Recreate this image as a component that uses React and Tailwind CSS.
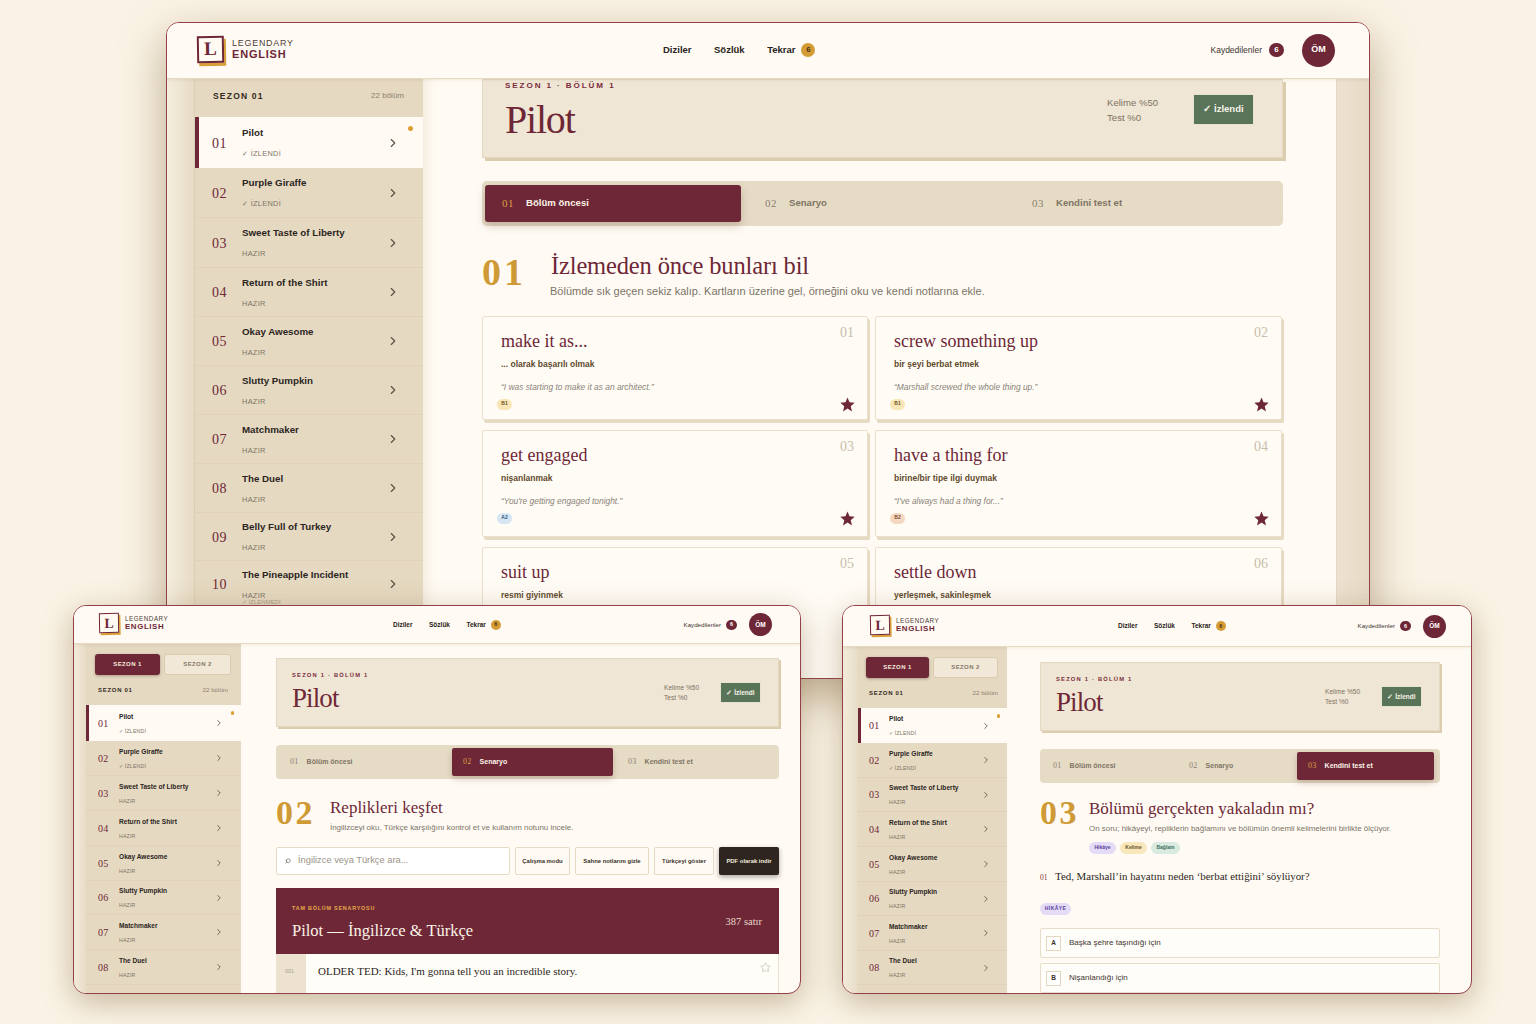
import React from 'react';
import { ChevronRight, Star, Search } from 'lucide-react';

const serif = "font-['Liberation_Serif',serif]";

const episodes = [
  ['01', 'Pilot', '✓ İZLENDİ'],
  ['02', 'Purple Giraffe', '✓ İZLENDİ'],
  ['03', 'Sweet Taste of Liberty', 'HAZIR'],
  ['04', 'Return of the Shirt', 'HAZIR'],
  ['05', 'Okay Awesome', 'HAZIR'],
  ['06', 'Slutty Pumpkin', 'HAZIR'],
  ['07', 'Matchmaker', 'HAZIR'],
  ['08', 'The Duel', 'HAZIR'],
  ['09', 'Belly Full of Turkey', 'HAZIR'],
  ['10', 'The Pineapple Incident', 'HAZIR'],
];

const big = {
  logoBox: 'w-[27px] h-[27px] shadow-[2px_3px_0_#d9a03a] border-2 text-[19px] -rotate-1',
  logoGap: 'gap-[8px]',
  logoTop: 'text-[8.9px] tracking-[0.8px] leading-[11px]',
  logoBottom: 'text-[11px] tracking-[0.8px] leading-[11px]',
  logoNudge: '-mt-[2px]',
  navGap: 'gap-[22.5px]',
  nav: 'text-[9.5px] font-bold',
  tekrarGap: 'gap-[6px]',
  navBadge: 'w-[14px] h-[14px] text-[8px]',
  right: 'text-[8.5px]',
  rightGap: 'gap-[7px]',
  kBadge: 'w-[15px] h-[14px] text-[8px]',
  avatar: 'w-[33px] h-[33px] text-[9px] ml-[11px]',
  sideHead: 'h-[38px] pl-[18px] pr-[19px] pb-[4px]',
  sideT: 'text-[8.5px] tracking-[1.2px]',
  sideR: 'text-[8px]',
  num: 'text-[14px] tracking-[0.5px] pt-[1px]',
  title: 'text-[9.75px] leading-[13px]',
  sub: 'text-[7.4px] leading-[10px] mt-[10px] tracking-[0.3px]',
  chev: 14,
  chevW: 'pr-[23px]',
  bar: 'w-[4px]',
  dot: 'w-[5px] h-[5px] top-[9px] right-[10px]',
  heroH: 'h-[79px] pl-[22px] pr-[28px] shadow-[3px_3px_0_#dccdae]',
  heroPt: 'pt-[14px]',
  eyebrow: 'text-[8.1px] tracking-[1.9px] leading-[12px]',
  heroTitle: 'text-[40px] leading-[44px] mt-[6px] tracking-[-1.2px]',
  stats: 'w-[86px] text-[9.6px] leading-[15px] font-medium',
  statsMt: 'mt-[1px]',
  btn: 'w-[61px] h-[31px] text-[9.5px]',
  track: 'h-[45px] py-[4px] pl-[3px] pr-[4px] rounded-[5px]',
  tabN: 'text-[11px] tracking-[0.5px]',
  tabL: 'text-[9.6px]',
  tabGap: 'gap-[12px]',
  activeTab: 'rounded-[3px] shadow-[0_4px_8px_rgba(90,50,40,0.25)]',
  big: 'text-[38px] leading-[38px] tracking-[3px] font-semibold',
  heading: 'text-[24.5px] leading-[30px] tracking-[-0.15px] pl-[1px]',
  desc: 'text-[11px] leading-[14px] mt-[3px]',
};

const small = {
  logoBox: 'w-[20px] h-[20px] shadow-[1.5px_2px_0_#d9a03a] border-[1.5px] text-[14px] -rotate-1',
  logoGap: 'gap-[6px]',
  logoTop: 'text-[6.3px] tracking-[0.5px] leading-[8px]',
  logoBottom: 'text-[7.9px] tracking-[0.6px] leading-[8px]',
  logoNudge: '-mt-[3px]',
  navGap: 'gap-[16.5px]',
  nav: 'text-[6.5px] font-bold',
  tekrarGap: 'gap-[5px]',
  navBadge: 'w-[10px] h-[10px] text-[5.5px]',
  right: 'text-[6.2px]',
  rightGap: 'gap-[5px]',
  kBadge: 'w-[11px] h-[10px] text-[5.5px]',
  avatar: 'w-[23px] h-[23px] text-[6.5px] ml-[7px]',
  sideT: 'text-[6px] tracking-[0.7px]',
  sideR: 'text-[6.2px]',
  num: 'text-[10px] tracking-[0.3px]',
  title: 'text-[6.6px] leading-[9px]',
  sub: 'text-[5.2px] leading-[7px] mt-[7px] tracking-[0.2px]',
  chev: 10,
  bar: 'w-[3px]',
  dot: 'w-[3.5px] h-[3.5px] top-[6px] right-[7px]',
  heroH: 'h-[69px] pl-[15px] pr-[17px] shadow-[2px_2px_0_#dccdae]',
  heroPt: 'pt-[23px]',
  eyebrow: 'text-[5.8px] tracking-[1.2px] leading-[8px] mt-[12px]',
  heroTitle: 'text-[27px] leading-[30px] mt-[4px] tracking-[-0.9px]',
  stats: 'w-[56px] text-[6.6px] leading-[10px] font-medium',
  statsMt: 'mt-[1px]',
  btn: 'w-[41px] h-[21px] text-[6.5px]',
  track: 'h-[34px] p-[3px] rounded-[4px]',
  tabN: 'text-[8px] tracking-[0.3px]',
  tabL: 'text-[7px]',
  tabGap: 'gap-[8px]',
  activeTab: 'rounded-[2px] shadow-[0_3px_6px_rgba(90,50,40,0.25)]',
  big: 'text-[34px] leading-[34px] tracking-[2.5px] font-semibold',
  heading: 'text-[17px] leading-[22px]',
  desc: 'text-[7.95px] leading-[10px] mt-[4px]',
};

function StarSolid({ size = 15 }) {
  return (
    <svg width={size} height={size} viewBox="0 0 20 20" className="shrink-0">
      <polygon points="10,0.5 12.7,7.1 19.6,7.6 14.3,12.2 16,19.2 10,15.4 4,19.2 5.7,12.2 0.4,7.6 7.3,7.1" fill="#6e2737" />
    </svg>
  );
}

function Logo({ t }) {
  return (
    <div className={`flex items-center ${t.logoGap} ${t.logoNudge}`}>
      <div className={`flex items-center justify-center bg-[#fffaf2] border-[#6e2737] text-[#6e2737] font-bold ${serif} ${t.logoBox}`}>L</div>
      <div className="flex flex-col">
        <span className={`text-[#4d3d38] ${t.logoTop}`}>LEGENDARY</span>
        <span className={`text-[#6e2737] font-bold ${t.logoBottom}`}>ENGLISH</span>
      </div>
    </div>
  );
}

function Header({ t, h, logoW, rightPad }) {
  return (
    <div className={`flex items-center shrink-0 bg-[#fffbf4] border-b border-[#e6dac3] relative z-10 shadow-[0_1px_3px_rgba(140,110,60,0.12)] ${h}`}>
      <div className={`shrink-0 ${logoW}`}><Logo t={t} /></div>
      <nav className={`flex items-center text-[#2a2320] ${t.navGap} ${t.nav}`}>
        <span>Diziler</span>
        <span>Sözlük</span>
        <span className={`flex items-center ${t.tekrarGap}`}>
          Tekrar
          <span className={`flex items-center justify-center rounded-full bg-[#d39c35] text-[#4a3216] ${t.navBadge}`}>6</span>
        </span>
      </nav>
      <div className={`ml-auto flex items-center text-[#3d3430] ${t.rightGap} ${t.right} ${rightPad}`}>
        <span>Kaydedilenler</span>
        <span className={`flex items-center justify-center rounded-full bg-[#6e2737] text-white font-bold ${t.kBadge}`}>6</span>
        <span className={`flex items-center justify-center rounded-full bg-[#6e2737] text-white font-bold ${t.avatar}`}>ÖM</span>
      </div>
    </div>
  );
}

function Rows({ t, rows, count, numCol, chev }) {
  return (
    <>
      {episodes.slice(0, count).map((e, i) => {
        const active = i === 0;
        return (
          <div key={e[0]} className={`relative flex items-center shrink-0 ${rows[i]} ${active ? 'bg-[#fffbf4]' : 'border-b border-[#dfd2b8]'}`}>
            {active && <span className={`absolute left-0 top-0 bottom-0 bg-[#6e2737] ${t.bar}`} />}
            {active && <span className={`absolute rounded-full bg-[#dd9f33] ${t.dot}`} />}
            <div className={`shrink-0 text-[#6e2737] ${serif} ${t.num} ${numCol}`}>{e[0]}</div>
            <div className="flex-1 min-w-0">
              <div className={`font-bold text-[#2c2522] ${t.title}`}>{e[1]}</div>
              <div className={`text-[#7d7465] ${t.sub}`}>{e[2]}</div>
            </div>
            <div className={chev}><ChevronRight size={t.chev} strokeWidth={2} className="text-[#5c5247]" /></div>
          </div>
        );
      })}
    </>
  );
}

function SideHead({ t, cls }) {
  return (
    <div className={`flex items-center justify-between shrink-0 ${cls}`}>
      <span className={`font-bold text-[#33291f] ${t.sideT}`}>SEZON 01</span>
      <span className={`text-[#8b8070] ${t.sideR}`}>22 bölüm</span>
    </div>
  );
}

function SeasonTabs({ cls }) {
  return (
    <div className={`flex shrink-0 gap-[4px] ${cls}`}>
      <div className="flex-1 flex items-center justify-center rounded-[3px] bg-[#6e2737] text-[#f7ecdc] text-[6px] font-bold tracking-[0.4px] shadow-[0_1px_3px_rgba(60,30,20,0.35)]">SEZON 1</div>
      <div className="flex-1 flex items-center justify-center rounded-[3px] bg-[#f1e8d7] border border-[#d9cbaf] text-[#85796a] text-[6px] font-bold tracking-[0.4px]">SEZON 2</div>
    </div>
  );
}

function Hero({ t }) {
  return (
    <div className={`flex justify-between shrink-0 bg-[#f0e6d5] border border-[#e4d8c0] ${t.heroH}`}>
      <div className="min-w-0">
        <div className={`font-bold text-[#7a2c3c] ${t.eyebrow}`}>SEZON 1 · BÖLÜM 1</div>
        <div className={`text-[#6e2737] ${serif} ${t.heroTitle}`}>Pilot</div>
      </div>
      <div className={`flex items-start ${t.heroPt}`}>
        <div className={`text-[#7d7263] ${t.statsMt} ${t.stats}`}><div>Kelime %50</div><div>Test %0</div></div>
        <div className={`flex items-center justify-center bg-[#5a7459] border border-[#e8e2d0] text-[#f6f3e8] font-bold ${t.btn}`}>✓ İzlendi</div>
      </div>
    </div>
  );
}

function Tab({ t, n, label, active, cls }) {
  return (
    <div className={`flex items-center ${t.tabGap} ${cls} ${active ? `bg-[#6e2737] ${t.activeTab}` : ''}`}>
      <span className={`${serif} ${t.tabN} ${active ? 'text-[#dd9f3e]' : 'text-[#8b8071]'}`}>{n}</span>
      <span className={`font-bold ${t.tabL} ${active ? 'text-[#fbf3e6]' : 'text-[#7f7464]'}`}>{label}</span>
    </div>
  );
}

function SectionHead({ t, n, title, desc, numW, cls, headCls = '', children }) {
  return (
    <div className={`flex shrink-0 ${cls}`}>
      <div className={`shrink-0 text-[#cf9a35] ${serif} ${t.big} ${numW}`}>{n}</div>
      <div className="min-w-0">
        <div className={`text-[#6e2737] ${serif} ${t.heading} ${headCls}`}>{title}</div>
        <div className={`text-[#7b7367] ${t.desc}`}>{desc}</div>
        {children}
      </div>
    </div>
  );
}

const badge = {
  B1: 'bg-[#f8e6b6] text-[#6b5326]',
  A2: 'bg-[#d6e6f3] text-[#2f5877]',
  B2: 'bg-[#f5d8c2] text-[#7b4a2a]',
};

function Card({ n, title, tr, quote, level, h }) {
  return (
    <div className={`relative bg-[#fffcf6] border border-[#eadfca] rounded-[2px] shadow-[2px_3px_0_#e6dac2] pl-[18px] ${h}`}>
      <span className={`absolute top-[5px] right-[13px] text-[14px] text-[#c8bdaa] ${serif}`}>{n}</span>
      <div className={`text-[#6e2737] text-[18px] leading-[22px] mt-[12.5px] ${serif}`}>{title}</div>
      <div className="text-[8.5px] font-bold text-[#5f4a2c] leading-[11px] mt-[7px]">{tr}</div>
      {quote && <div className="text-[8.4px] italic text-[#8a8276] leading-[11px] mt-[12px]">{quote}</div>}
      {level && (
        <div className="flex items-center justify-between -ml-[4px] pr-[12px] mt-[4px]">
          <span className={`flex items-center justify-center rounded-full w-[15px] h-[11px] text-[5px] font-bold ${badge[level]}`}>{level}</span>
          <StarSolid size={15} />
        </div>
      )}
    </div>
  );
}

function Windowframe({ cls, children }) {
  return (
    <div className={`absolute flex flex-col overflow-hidden bg-[#fffbf4] border-[1.5px] border-[#93404b] rounded-[13px] ${cls}`}>
      {children}
    </div>
  );
}

function BigWindow() {
  const t = big;
  const rows = ['h-[51px]', 'h-[50px]', 'h-[50px]', 'h-[49px]', 'h-[49px]', 'h-[49px]', 'h-[49px]', 'h-[49px]', 'h-[48px]', 'h-[47px]'];
  return (
    <Windowframe cls="left-[166px] top-[22px] w-[1204px] h-[657px] shadow-[0_16px_44px_rgba(130,100,55,0.5)]">
      <Header t={t} h="h-[56px] pb-[1px]" logoW="w-[496px] pl-[30px]" rightPad="pr-[34px]" />
      <div className="flex flex-1 min-h-0">
        <div className="w-[27px] shrink-0 bg-gradient-to-r from-[#f5edde] to-[#e6dbc4]" />
        <div className="w-[229px] shrink-0 flex flex-col bg-[#e5d9c1] border-l border-[#dccfb4] overflow-hidden">
          <SideHead t={t} cls={t.sideHead} />
          <Rows t={t} rows={rows} count={10} numCol="w-[47px] pl-[17px]" chev={t.chevW} />
          <div className="relative -mt-[9px] pl-[47px] text-[6px] text-[#a69b88] leading-[7px] shrink-0">✓ İZLENMEDİ</div>
        </div>
        <div className="flex-1 min-w-0 pl-[59px] pr-[53px] flex flex-col shadow-[inset_12px_0_16px_-12px_rgba(150,120,70,0.2)]">
          <Hero t={t} />
          <div className={`flex shrink-0 mt-[23px] bg-[#e6dcc6] ${t.track}`}>
            <Tab t={t} n="01" label="Bölüm öncesi" active cls="w-[256px] pl-[17px]" />
            <Tab t={t} n="02" label="Senaryo" cls="w-[267px] pl-[24px]" />
            <Tab t={t} n="03" label="Kendini test et" cls="flex-1 pl-[24px]" />
          </div>
          <SectionHead
            t={t}
            n="01"
            title="İzlemeden önce bunları bil"
            desc="Bölümde sık geçen sekiz kalıp. Kartların üzerine gel, örneğini oku ve kendi notlarına ekle."
            numW="w-[68px] pt-[2px]"
            cls="mt-[25px]"
          />
          <div className="grid grid-cols-[386px_407px] gap-x-[7px] gap-y-[10px] mt-[18px]">
            <Card n="01" title="make it as..." tr="... olarak başarılı olmak" quote="“I was starting to make it as an architect.”" level="B1" h="h-[104px]" />
            <Card n="02" title="screw something up" tr="bir şeyi berbat etmek" quote="“Marshall screwed the whole thing up.”" level="B1" h="h-[104px]" />
            <Card n="03" title="get engaged" tr="nişanlanmak" quote="“You're getting engaged tonight.”" level="A2" h="h-[107px]" />
            <Card n="04" title="have a thing for" tr="birine/bir tipe ilgi duymak" quote="“I've always had a thing for...”" level="B2" h="h-[107px]" />
            <Card n="05" title="suit up" tr="resmi giyinmek" h="h-[150px]" />
            <Card n="06" title="settle down" tr="yerleşmek, sakinleşmek" h="h-[150px]" />
          </div>
        </div>
        <div className="w-[33px] shrink-0 bg-gradient-to-r from-[#ece2cf] to-[#e6dbc6] border-l border-[#e4d8c2]" />
      </div>
    </Windowframe>
  );
}

function Tool({ children, cls }) {
  return <div className={`flex items-center justify-center bg-[#fffbf4] border border-[#e6dac3] rounded-[2px] text-[5.9px] font-bold text-[#3a302a] ${cls}`}>{children}</div>;
}

function SmallSidebar({ rows, width, numCol, chev, tabsCls, headCls }) {
  return (
    <div className={`shrink-0 flex flex-col bg-[#e5d9c1] overflow-hidden ${width}`}>
      <SeasonTabs cls={tabsCls} />
      <SideHead t={small} cls={headCls} />
      <Rows t={small} rows={rows} count={8} numCol={numCol} chev={chev} />
    </div>
  );
}

function LeftWindow() {
  const t = small;
  return (
    <Windowframe cls="left-[73px] top-[605px] w-[728px] h-[389px] z-10 shadow-[0_8px_30px_rgba(130,100,55,0.42)]">
      <Header t={t} h="h-[38px]" logoW="w-[319px] pl-[25px]" rightPad="pr-[28px]" />
      <div className="flex flex-1 min-h-0">
        <div className="w-[12px] shrink-0 bg-gradient-to-r from-[#f3ebda] to-[#e7dcc6]" />
        <SmallSidebar
          width="w-[155px]"
          rows={['h-[36px]', 'h-[35px]', 'h-[35px]', 'h-[35px]', 'h-[35px]', 'h-[34px]', 'h-[35px]', 'h-[35px]']}
          numCol="w-[33px] pl-[12px]"
          chev="pr-[17px]"
          tabsCls="h-[21px] mt-[10px] ml-[9px] mr-[10px]"
          headCls="h-[30px] pl-[12px] pr-[13px]"
        />
        <div className="flex-1 min-w-0 pl-[35px] pr-[21px] pt-[14px] flex flex-col">
          <Hero t={t} />
          <div className={`flex shrink-0 mt-[18px] bg-[#e6dcc6] ${t.track}`}>
            <Tab t={t} n="01" label="Bölüm öncesi" cls="w-[173px] pl-[11px]" />
            <Tab t={t} n="02" label="Senaryo" active cls="w-[161px] pl-[11px]" />
            <Tab t={t} n="03" label="Kendini test et" cls="flex-1 pl-[15px]" />
          </div>
          <SectionHead
            t={t}
            n="02"
            title="Replikleri keşfet"
            desc="İngilizceyi oku, Türkçe karşılığını kontrol et ve kullanım notunu incele."
            numW="w-[54px] -mt-[1px]"
            cls="mt-[18px]"
          />
          <div className="flex shrink-0 gap-[5px] h-[28px] mt-[14px]">
            <div className="w-[234px] flex items-center gap-[5px] pl-[8px] bg-white border border-[#e6dac3] rounded-[2px] text-[9.3px] text-[#9b9488]">
              <Search size={6} strokeWidth={2.5} className="-scale-x-100 text-[#6a6155]" />
              <span className="ml-[2px]">İngilizce veya Türkçe ara...</span>
            </div>
            <Tool cls="w-[55px]">Çalışma modu</Tool>
            <Tool cls="w-[74px]">Sahne notlarını gizle</Tool>
            <Tool cls="w-[60px]">Türkçeyi göster</Tool>
            <div className="w-[60px] flex items-center justify-center rounded-[2px] bg-[#2f2520] text-[#f4ecde] text-[5.9px] font-bold shadow-[0_2px_5px_rgba(40,30,20,0.4)]">PDF olarak indir</div>
          </div>
          <div className="flex justify-between shrink-0 h-[66px] mt-[13px] pl-[16px] pr-[17px] bg-[#6e2737]">
            <div>
              <div className="text-[5.4px] font-bold tracking-[0.8px] text-[#e5ac4a] mt-[17px] leading-[7px]">TAM BÖLÜM SENARYOSU</div>
              <div className={`text-[16.5px] leading-[21px] text-[#fbf3e6] mt-[8px] ${serif}`}>Pilot — İngilizce & Türkçe</div>
            </div>
            <div className={`text-[10.5px] text-[#e9d9c8] mt-[26px] ${serif}`}>387 satır</div>
          </div>
          <div className="flex flex-1 min-h-0 bg-[#fffdf8] border-r border-[#eadfca]">
            <div className="w-[30px] shrink-0 bg-[#ece2cf] text-[#a89d8c] text-[5.5px] pl-[9px] pt-[13px]">001</div>
            <div className={`flex-1 pl-[12px] pt-[9px] text-[11px] leading-[16px] text-[#2c2522] ${serif}`}>OLDER TED: Kids, I'm gonna tell you an incredible story.</div>
            <div className="pr-[7px] pt-[8px]"><Star size={11} strokeWidth={1} className="text-[#a59a87]" /></div>
          </div>
        </div>
      </div>
    </Windowframe>
  );
}

function Pill({ cls, children }) {
  return <span className={`flex items-center justify-center rounded-full h-[12px] text-[5px] font-bold ${cls}`}>{children}</span>;
}

function Option({ letter, text, cls }) {
  return (
    <div className={`flex items-center gap-[8px] bg-[#fffdf9] border border-[#e8ddc8] rounded-[2px] pl-[5px] shrink-0 ${cls}`}>
      <span className="w-[15px] h-[15px] flex items-center justify-center bg-white border border-[#e3d7c0] text-[6.5px] font-bold text-[#3a302a]">{letter}</span>
      <span className="text-[8px] text-[#3f3630]">{text}</span>
    </div>
  );
}

function RightWindow() {
  const t = small;
  return (
    <Windowframe cls="left-[842px] top-[605px] w-[630px] h-[389px] z-10 shadow-[0_8px_30px_rgba(130,100,55,0.42)]">
      <Header t={t} h="h-[41px]" logoW="w-[275px] pl-[27px]" rightPad="pr-[25px]" />
      <div className="flex flex-1 min-h-0">
        <div className="w-[15px] shrink-0 bg-gradient-to-r from-[#f3ebda] to-[#e7dcc6]" />
        <SmallSidebar
          width="w-[149px]"
          rows={['h-[35px]', 'h-[35px]', 'h-[34px]', 'h-[35px]', 'h-[35px]', 'h-[34px]', 'h-[35px]', 'h-[34px]']}
          numCol="w-[31px] pl-[11px]"
          chev="pr-[16px]"
          tabsCls="h-[21px] mt-[10px] ml-[8px] mr-[9px]"
          headCls="h-[30px] pl-[11px] pr-[9px]"
        />
        <div className="flex-1 min-w-0 pl-[33px] pr-[31px] pt-[15px] flex flex-col">
          <Hero t={t} />
          <div className={`flex shrink-0 mt-[18px] bg-[#e6dcc6] ${t.track}`}>
            <Tab t={t} n="01" label="Bölüm öncesi" cls="w-[136px] pl-[10px]" />
            <Tab t={t} n="02" label="Senaryo" cls="w-[118px] pl-[10px]" />
            <Tab t={t} n="03" label="Kendini test et" active cls="w-[137px] pl-[11px]" />
          </div>
          <SectionHead
            t={t}
            n="03"
            title="Bölümü gerçekten yakaladın mı?"
            desc="On soru; hikâyeyi, repliklerin bağlamını ve bölümün önemli kelimelerini birlikte ölçüyor."
            numW="w-[49px] -mt-[2px]"
            cls="mt-[15px]"
            headCls="text-[15.8px]"
          >
            <div className="flex gap-[4px] mt-[8px]">
              <Pill cls="w-[27px] bg-[#e4dcf6] text-[#5b3f9a]">Hikâye</Pill>
              <Pill cls="w-[27px] bg-[#f8e7bb] text-[#6b5326]">Kelime</Pill>
              <Pill cls="w-[29px] bg-[#d9eae0] text-[#3b6d58]">Bağlam</Pill>
            </div>
          </SectionHead>
          <div className="flex items-baseline shrink-0 mt-[14px]">
            <span className={`w-[15px] shrink-0 text-[7.5px] text-[#7c2b3b] ${serif}`}>01</span>
            <span className={`text-[10.9px] leading-[16px] text-[#2c2522] ${serif}`}>Ted, Marshall’in hayatını neden ‘berbat ettiğini’ söylüyor?</span>
          </div>
          <Pill cls="w-[31px] mt-[19px] shrink-0 bg-[#e4dcf6] text-[#5b3f9a] tracking-[0.4px]">HİKÂYE</Pill>
          <Option letter="A" text="Başka şehre taşındığı için" cls="h-[30px] mt-[13px]" />
          <Option letter="B" text="Nişanlandığı için" cls="h-[30px] mt-[5px]" />
        </div>
      </div>
    </Windowframe>
  );
}

export default function App() {
  return (
    <div className="relative w-[1536px] h-[1024px] overflow-hidden bg-[#faf3e5] font-['Liberation_Sans',sans-serif]">
      <BigWindow />
      <LeftWindow />
      <RightWindow />
    </div>
  );
}
